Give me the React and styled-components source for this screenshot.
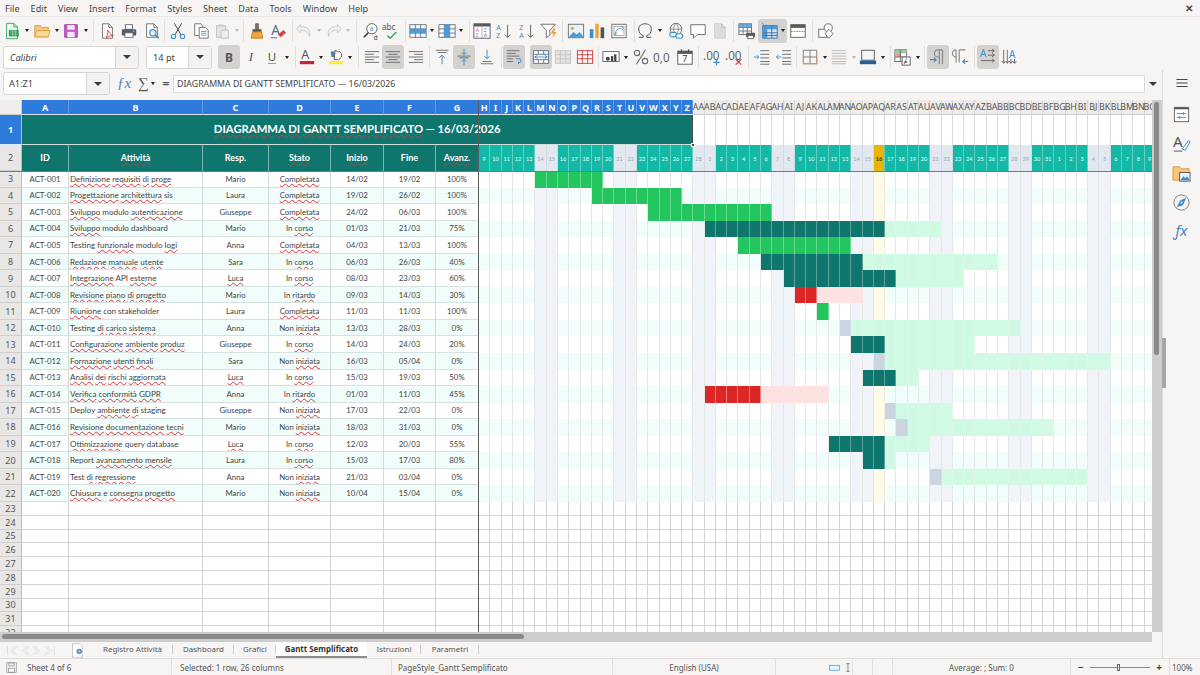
import React from "react";
import styled, { createGlobalStyle } from "styled-components";

const Global = createGlobalStyle`
  html, body { margin: 0; padding: 0; background: #f6f5f4; overflow: hidden; }
  * { box-sizing: border-box; }
`;

const UI = `"Noto Sans", "Open Sans", sans-serif`;
const CELL = `Lato, "Noto Sans", sans-serif`;

const Page = styled.div`
  width: 1200px; height: 675px; display: flex; flex-direction: column;
  background: #f6f5f4; font-family: ${UI}; color: #3d3d3d; overflow: hidden;
`;
const MenuBar = styled.div`
  height: 17px; display: flex; align-items: center; gap: 11px; padding-left: 5px;
  font-size: 9.15px; color: #444; border-bottom: 1px solid #e9e8e6; position: relative; flex: none;
`;
const CloseBtn = styled.span`
  position: absolute; right: 7px; top: 1px; font-size: 10px; font-weight: 700; color: #444;
`;
const ToolRow = styled.div`
  display: flex; align-items: center; height: ${p => p.$h}px; padding-left: ${p => p.$pl}px; flex: none;
`;
const Slot = styled.div`
  flex: none; width: ${p => p.$w}px; height: 24px; display: flex; align-items: center; justify-content: center;
  gap: 2px; border-radius: 3px; background: ${p => (p.$active ? "#d4d2cf" : "transparent")};
`;
const SepLine = styled.div`
  flex: none; width: ${p => p.$w}px; height: 22px; display: flex; justify-content: center;
  &::after { content: ""; width: 1px; height: 100%; background: ${p => (p.$blank ? "transparent" : "#e0dfdc")}; }
`;
const Caret = styled.span`
  flex: none; width: 0; height: 0; border-left: 2.5px solid transparent; border-right: 2.5px solid transparent;
  border-top: 3px solid ${p => (p.$off ? "#b9b8b6" : "#222")};
`;
const BigCaret = styled(Caret)`
  border-left-width: 4px; border-right-width: 4px; border-top-width: 4px; border-top-color: #3a3a3a;
`;
const Combo = styled.div`
  flex: none; width: ${p => p.$w}px; height: 23px; display: flex; background: #fff;
  border: 1px solid #d6d5d2; border-radius: 3px; margin-right: ${p => p.$mr || 0}px; overflow: hidden;
`;
const ComboText = styled.div`
  flex: 1; padding-left: ${p => p.$pl}px; font-size: 9.2px; line-height: 21px; color: #444;
  font-style: ${p => (p.$italic ? "italic" : "normal")};
`;
const ComboDrop = styled.div`
  flex: none; width: 23px; background: #f3f2f0; border-left: 1px solid #d6d5d2;
  display: flex; align-items: center; justify-content: center;
`;
const Bold = styled.span`font: 700 12px ${UI}; color: #555;`;
const Ital = styled.span`font: italic 400 13px "Liberation Serif", serif; color: #555;`;
const Under = styled.span`
  font: 400 11.5px ${UI}; color: #555; border-bottom: 1.5px solid #6fa8dc; line-height: 12px;
`;

const Workspace = styled.div`display: flex; flex: 1; min-height: 0;`;
const LeftCol = styled.div`width: 1162px; display: flex; flex-direction: column; flex: none;`;
const FormulaBar = styled.div`
  height: 30px; display: flex; align-items: center; padding: 0 0 3px 3px; flex: none;
`;
const FxGlyph = styled.span`
  width: 14px; margin-left: 7px; font: italic 400 15px "Liberation Serif", serif; color: #4a86c5; text-align: center;
`;
const SumGlyph = styled.span`
  width: 16px; margin-left: 4px; font: 400 15px "Liberation Serif", serif; color: #555; text-align: center;
`;
const EqGlyph = styled.span`
  width: 12px; margin-left: 5px; margin-right: 1px; font: 700 12px ${UI}; color: #555; text-align: center;
`;
const FormulaInput = styled.div`
  width: 972px; height: 18px; background: #fff; border: 1px solid #dcdbd8; border-radius: 1px;
  font-size: 8.75px; line-height: 16px; padding-left: 3px; color: #444; white-space: nowrap; flex: none;
`;
const FormulaDrop = styled.div`width: 16px; display: flex; justify-content: center; flex: none;`;

const SheetRow = styled.div`display: flex; height: 532px; flex: none;`;
const GridWrap = styled.div`
  position: relative; width: 1152px; height: 532px; overflow: hidden; flex: none; background: #fff;
`;
const Grid = styled.div`
  display: grid;
  grid-template-columns: 22px 47px 134px 66px 62px 53px 52px 43px repeat(60, 11.29px);
  grid-template-rows: 15px 30px 26px repeat(20, 16.55px) repeat(10, 13.8px);
  font-family: ${CELL};
`;
const Corner = styled.div`background: #efeeec; border-right: 1px solid #ccc; border-bottom: 1px solid #ccc;`;
const ColHead = styled.div`
  display: flex; align-items: center; justify-content: center; overflow: visible; white-space: nowrap;
  font: ${p => (p.$sel ? 700 : 400)} ${p => (p.$sel ? 9 : 8.8)}px ${UI};
  background: ${p => (p.$sel ? "#2f7bdc" : "#eeedeb")}; color: ${p => (p.$sel ? "#fff" : "#555")};
  border-right: 1px solid ${p => (p.$sel ? "#5c9ae6" : "#d6d5d3")};
  border-bottom: 1px solid ${p => (p.$sel ? "#dbe8f8" : "#ccc")};
`;
const RowHead = styled.div`
  display: flex; align-items: center; justify-content: center; font: ${p => (p.$sel ? 700 : 400)} 9px ${UI};
  background: ${p => (p.$sel ? "#2f7bdc" : "#e8e7e5")}; color: ${p => (p.$sel ? "#fff" : "#555")};
  border-right: 1px solid #bbb; border-bottom: 1px solid ${p => (p.$sel ? "#dbe8f8" : "#cfcecc")};
`;
const TitleCell = styled.div`
  grid-column: span 26; background: #0f766e; color: #fff; font: 700 11.3px ${CELL};
  display: flex; align-items: center; justify-content: center; white-space: pre;
  border-right: 1px solid #4a4a4a; border-bottom: 1.5px solid #cfe0dd; padding-bottom: 2px;
`;
const BlankCell = styled.div`border-right: 1px solid #dcdcda;`;
const HeadCell = styled.div`
  background: #0f766e; color: #fff; font: 700 9px ${CELL}; display: flex; align-items: center; justify-content: center;
  border-right: 1px solid #7fb8b0; padding-bottom: 2px;
`;
const DayCell = styled.div`
  background: ${p => (p.$today ? "#eab308" : p.$weekend ? "#e2e8f0" : "#14b8a6")};
  color: ${p => (p.$today ? "#3a2f00" : p.$weekend ? "#9aa5b5" : "#e8fffa")};
  font: ${p => (p.$today ? 700 : 400)} 5.6px ${CELL}; display: flex; align-items: center; justify-content: center;
  border-right: 1px solid ${p => (p.$weekend ? "#d5dae2" : "#5fd0c1")};
  white-space: nowrap;
`;
const DataCell = styled.div`
  background: ${p => (p.$alt ? "#f0fdfa" : "#fff")}; color: #444; font: 400 ${p => (p.$left ? 8.05 : 7.8)}px ${CELL};
  display: flex; align-items: center; justify-content: ${p => (p.$left ? "flex-start" : "center")};
  padding-left: ${p => (p.$left ? 1 : 0)}px; white-space: pre; overflow: hidden;
  border-right: 1px solid #cfdcd9; border-bottom: 1px solid #d6e2df;
`;
const GanttCell = styled.div`
  background: ${p => p.$bg}; border-right: 1px solid ${p => p.$line};
`;
const EmptyCell = styled.div`
  background: #fff; border-right: 1px solid #d3d3d3; border-bottom: 1px solid #d3d3d3;
`;
const Wavy = styled.span`
  text-decoration: underline wavy #d8343a 0.7px; text-underline-offset: 1px; text-decoration-skip-ink: none;
`;
const FreezeV = styled.div`
  position: absolute; left: 478px; top: 0; width: 1.4px; height: 532px; background: #5c5c5c;
`;
const FreezeH = styled.div`
  position: absolute; left: 0; top: 70.5px; width: 1152px; height: 1.4px; background: #777;
`;
const SelHandle = styled.div`
  position: absolute; left: 691px; top: 43px; width: 4px; height: 4px; background: #444; border: 0.5px solid #fff;
`;
const VScroll = styled.div`
  width: 10px; height: 532px; background: #cdcdcd; padding: 2px 0 0 2px; flex: none;
`;
const VThumb = styled.div`width: 5px; height: 253px; border-radius: 3px; background: #8a8a8a;`;
const HScroll = styled.div`
  width: 1152px; height: 10px; background: #cdcdcd; padding: 2px 0 0 2px; flex: none;
`;
const HThumb = styled.div`width: 522px; height: 5px; border-radius: 3px; background: #8a8a8a;`;
const TabBar = styled.div`
  flex: 1; display: flex; align-items: center; font-size: 7.9px; color: #555; padding-left: 5px; min-height: 0;
`;
const TabNav = styled.div`width: 62px; flex: none; display: flex; align-items: center;`;
const NewSheet = styled.div`width: 25px; flex: none; display: flex; align-items: center; padding-left: 4px;`;
const Tab = styled.div`
  flex: none; height: 16px; line-height: 15px; text-align: center; width: ${p => p.$w}px;
  font-weight: ${p => (p.$active ? 700 : 400)}; color: ${p => (p.$active ? "#333" : "#555")};
  border-bottom: ${p => (p.$active ? "2px solid #8d8d8d" : "none")};
  background: ${p => (p.$active ? "#fff" : "transparent")};
  position: relative;
  &::after {
    content: ""; position: absolute; right: 0; top: 3px; height: 9px; width: 1px;
    background: ${p => (p.$active ? "transparent" : "#cfcecc")};
  }
`;
const Sidebar = styled.div`
  flex: 1; border-left: 1px solid #dddcda; position: relative; display: flex; flex-direction: column;
  align-items: center; padding-top: 6px; gap: 10.5px;
`;
const SideMenu = styled.div`margin-bottom: 4px; display: flex;`;
const SideHandle = styled.div`
  position: absolute; left: -1px; top: 268px; width: 4px; height: 50px; background: #a5a5a5;
`;
const Status = styled.div`
  height: 17px; flex: none; display: flex; align-items: center; font-size: 8px; color: #555;
  border-top: 1px solid #dedddb;
`;
const StatusCell = styled.div`
  flex: none; width: ${p => p.$w}px; height: 100%; display: flex; align-items: center;
  justify-content: ${p => (p.$center ? "center" : "flex-start")};
  padding-left: ${p => p.$pl || 0}px; border-right: 1px solid ${p => (p.$noLine ? "transparent" : "#e2e1df")};
  white-space: nowrap; gap: 3px;
`;
const SheetCount = styled.span`margin-left: 6px;`;
const ZoomTrack = styled.div`
  width: 60px; height: 1px; background: #8a8a8a; position: relative; flex: none; margin: 0 1px;
`;
const ZoomKnob = styled.div`
  position: absolute; left: 27px; top: -3px; width: 3px; height: 7px; border: 1px solid #666; background: #eee;
`;
const ZoomSign = styled.span`font: 700 10px ${UI}; color: #444; width: 10px; text-align: center;`;

const Svg = styled.svg`flex: none; display: block; overflow: visible;`;
const Ico = ({ n, s = 18 }) => <Svg width={s} height={s} viewBox="0 0 20 20" fill="none">{ICONS[n]}</Svg>;

const Lines = ({ rows, c = "#666", w = 1 }) => (
  <>{rows.map(([a, y, b], i) => <path key={i} d={`M${a} ${y}H${b}`} stroke={c} strokeWidth={w} />)}</>
);
const T = ({ x, y, c = "#555", s = 8, w = 400, children, i }) => (
  <text x={x} y={y} fill={c} fontSize={s} fontWeight={w} fontStyle={i ? "italic" : "normal"} fontFamily="Noto Sans, sans-serif">{children}</text>
);
const TableG = ({ c = "#5a5a5a", x = 2, y = 3, w = 16, h = 14 }) => (
  <g stroke={c}>
    <rect x={x} y={y} width={w} height={h} fill="#fff" />
    <path d={`M${x} ${y + h / 3}H${x + w}M${x} ${y + (2 * h) / 3}H${x + w}M${x + w / 3} ${y}V${y + h}M${x + (2 * w) / 3} ${y}V${y + h}`} />
  </g>
);

const ICONS = {
  new: <><path d="M4 1.5h8l4 4v13H4z" fill="#f2faf4" stroke="#35a05a" /><path d="M12 1.5v4h4" stroke="#35a05a" /><rect x="6.5" y="9" width="11" height="7" fill="#2f9a55" /><path d="M8 11h8M8 13.5h8M11 9v7M14 9v7" stroke="#bfe6cc" strokeWidth=".6" /></>,
  open: <><path d="M2 16.5V4h6l2 2h7v10.5z" fill="#f7c77c" stroke="#dc9a45" /><path d="M2 16.5l2-7h15l-2 7z" fill="#fbd999" stroke="#dc9a45" /></>,
  save: <><path d="M3 3h14v14H3z" fill="#c25fc6" stroke="#9a3aa0" /><rect x="6" y="3.5" width="8" height="5" fill="#f6e7f7" /><rect x="6" y="11" width="8" height="6" fill="#f6e7f7" /></>,
  pdf: <><path d="M5 2h7l4 4v12H5z" fill="#fff" stroke="#6d6d6d" /><path d="M12 2v4h4" stroke="#6d6d6d" /><path d="M9 18c2-5 2-7 2-9 1 3 3 5 6 6-3 0-6 1-8 3z" stroke="#d8423c" fill="none" /></>,
  print: <><rect x="6" y="3" width="8" height="5" fill="#fff" stroke="#666" /><rect x="2" y="8" width="16" height="7" rx="1" fill="#4e5d6b" /><rect x="5.5" y="12" width="9" height="5" fill="#fff" stroke="#666" /><rect x="14" y="9.5" width="2" height="1.4" fill="#9ad" /></>,
  preview: <><path d="M4 2h8l4 4v11H4z" fill="#fff" stroke="#6d6d6d" /><path d="M12 2v4h4" stroke="#6d6d6d" /><circle cx="11" cy="12" r="3.5" fill="#e5f1fb" stroke="#3d8ecf" strokeWidth="1.3" /><path d="M13.5 14.5l4 3.5" stroke="#3d8ecf" strokeWidth="1.7" /></>,
  cut: <><path d="M6 1.5l7.5 13M14 1.5l-7.5 13" stroke="#444" strokeWidth="1.1" /><circle cx="5" cy="16" r="2.4" stroke="#3d8ecf" strokeWidth="1.2" /><circle cx="15" cy="16" r="2.4" stroke="#3d8ecf" strokeWidth="1.2" /></>,
  copy: <><path d="M3 2h7l2 2v11H3z" fill="#fff" stroke="#6d6d6d" /><path d="M8 6h7l3 3v9H8z" fill="#fff" stroke="#6d6d6d" /><Lines rows={[[10, 10.5, 16], [10, 12.5, 16], [10, 14.5, 16]]} c="#4d9bd6" /></>,
  paste: <><path d="M4 4h10v13H4z" fill="#e6e5e3" stroke="#bdbcba" /><rect x="6.5" y="2.5" width="5" height="3" fill="#cfcecc" /><path d="M9 9h8v9H9z" fill="#efeeec" stroke="#bdbcba" /></>,
  clone: <><path d="M8.5 2h3v6h-3z" fill="#8a7763" stroke="#6f5d4b" /><rect x="5" y="8" width="10" height="3" fill="#555" /><path d="M5 11h10l1.5 7h-13z" fill="#f0a63c" stroke="#c67d1d" /></>,
  clear: <><T x="2.5" y="14" s={15} c="#4d6f95">A</T><path d="M2 17.5h7" stroke="#4d6f95" /><path d="M10 14l6-5 3 3-6 5z" fill="#e0433d" /></>,
  undo: <path d="M6 3L2 7.5l4 4.5V9c6 0 9 2 10 7 2-8-3-11-10-11z" stroke="#c8c7c5" fill="#f3f2f0" />,
  redo: <path d="M14 3l4 4.5-4 4.5V9c-6 0-9 2-10 7C2 8 7 5 14 5z" stroke="#c8c7c5" fill="#f3f2f0" />,
  find: <><circle cx="11" cy="7.5" r="5.7" stroke="#555" fill="#fff" /><T x="8.5" y="10" s={7} c="#3d7fc1">a</T><path d="M7 12l-5 5" stroke="#333" strokeWidth="1.8" /><T x="13" y="19.500" s={7} c="#444">d</T></>,
  spell: <><T x="0" y="9" s={9} c="#555">abc</T><path d="M6 15l3 3 7-7" stroke="#35a05a" strokeWidth="1.6" /></>,
  rowT: <><TableG x={1} y={3} w={18} h={14} c="#5c6e80" /><rect x="1" y="7.6" width="18" height="4.6" fill="#4d9bd6" /></>,
  colT: <><TableG x={1} y={3} w={18} h={14} c="#5c6e80" /><rect x="7" y="3" width="6" height="14" fill="#4d9bd6" /></>,
  sort: <><rect x="1" y="2" width="18" height="16" fill="#fff" stroke="#5a5a5a" /><rect x="1" y="2" width="18" height="3" fill="#5a5a5a" /><path d="M10 5v13" stroke="#aaa" /><T x="3" y="11" s={5.500} c="#c05ac5">A</T><T x="3" y="17" s={5.500} c="#c05ac5">Z</T><T x="12" y="11" s={5.500} c="#3d8ecf">Z</T><T x="12" y="17" s={5.500} c="#3d8ecf">A</T></>,
  asc: <><T x="1.500" y="9" s={8} c="#3d8ecf">A</T><T x="1.500" y="18" s={8} c="#c05ac5">Z</T><path d="M14 3v14M11 14l3 3 3-3" stroke="#666" strokeWidth="1.1" /></>,
  desc: <><T x="1.500" y="9" s={8} c="#c05ac5">Z</T><T x="1.500" y="18" s={8} c="#3d8ecf">A</T><path d="M14 3v14M11 14l3 3 3-3" stroke="#666" strokeWidth="1.1" /></>,
  filter: <><path d="M1 2.5h16l-6 7v5l-4 3v-8z" fill="#fff" stroke="#666" /><path d="M15 7l-3 6h3l-1.5 5 5-7h-3l2-4z" fill="#f0a63c" /></>,
  image: <><rect x="1.5" y="2.5" width="17" height="15" fill="#e8f3fb" stroke="#6d6d6d" /><circle cx="6" cy="7" r="1.8" fill="#f0a63c" /><path d="M2 17l5-6 4 3 3-3 4 5v1z" fill="#4d9bd6" /></>,
  chart: <><rect x="2" y="8" width="4" height="10" fill="#3d8ecf" /><rect x="8" y="2" width="4" height="16" fill="#f0a63c" /><rect x="14" y="6" width="4" height="12" fill="#555" /></>,
  pivot: <><rect x="2" y="2.5" width="16" height="15" fill="#f5f5f5" stroke="#6d6d6d" /><rect x="4.5" y="5" width="11" height="10" fill="#fff" stroke="#aaa" /><path d="M6 12c1-4 4-5 7-5M13 5l2 2-2 2M7 15l-2-2 3-1" stroke="#3d8ecf" /></>,
  omega: <path d="M3 17h5v-2c-3-1-5-3-5-7 0-4 3-6 7-6s7 2 7 6c0 4-2 6-5 7v2h5" stroke="#555" strokeWidth="1.1" />,
  link: <><circle cx="10" cy="8" r="6.5" stroke="#666" /><path d="M3.5 8h13M10 1.5c-3.5 4-3.5 9 0 13M10 1.5c3.5 4 3.5 9 0 13" stroke="#666" strokeWidth=".7" /><rect x="3" y="11.5" width="7.5" height="5" rx="2.5" fill="#fff" stroke="#3d8ecf" strokeWidth="1.2" /><rect x="10" y="13" width="7.5" height="5" rx="2.5" fill="#fff" stroke="#3d8ecf" strokeWidth="1.2" /></>,
  comment: <path d="M2 3h16v11H9l-4 4v-4H2z" fill="#fff" stroke="#666" />,
  headers: <><path d="M4 2h8l4 4v12H4z" fill="#dedddb" stroke="#cfcecc" /><path d="M12 2v4h4" stroke="#bbb" /></>,
  printArea: <><TableG x={1} y={2} w={14} h={12} c="#5c6e80" /><rect x="1" y="2" width="14" height="4" fill="#4d9bd6" opacity=".8" /><rect x="9" y="12" width="10" height="5" rx="1" fill="#5a5a5a" /><rect x="11" y="15" width="6" height="3.5" fill="#fff" stroke="#666" /></>,
  freeze: <><rect x="2" y="4" width="16" height="14" fill="#cfe3f4" stroke="#3d6e9e" /><rect x="2" y="4" width="5" height="14" fill="#4d9bd6" /><rect x="2" y="4" width="16" height="4" fill="#4d9bd6" /><path d="M2 12h16M2 15h16M12 4v14" stroke="#3d6e9e" /><path d="M1 1l5 5M3 6h3V3" stroke="#3d8ecf" /></>,
  split: <><rect x="2" y="3" width="16" height="14" fill="#fff" stroke="#5a5a5a" /><rect x="2" y="3" width="16" height="3.5" fill="#5a5a5a" /><path d="M2 10.5h16" stroke="#3d8ecf" strokeDasharray="2 1" /></>,
  shapes: <><rect x="2" y="8" width="9" height="9" stroke="#666" fill="#fff" /><circle cx="12.5" cy="6.5" r="4.5" stroke="#666" fill="#fff" /><path d="M13 8l5 5-5 5-4-5z" stroke="#666" fill="#fff" /></>,
  color: <><T x="3.5" y="12.5" s={14} c="#555">A</T><rect x="2" y="14.5" width="16" height="3.5" fill="#c8242b" /></>,
  hl: <><path d="M4 4h6v6h-5z" fill="#4d7fb5" /><path d="M9 2.5l2 1 1 1 2-.5 2 2v4l-3 3H8z" fill="#fff" stroke="#555" /><rect x="2" y="14.5" width="16" height="3.5" fill="#ffee33" /></>,
  aLeft: <Lines rows={[[2, 4, 18], [2, 7, 12], [2, 10, 18], [2, 13, 12], [2, 16, 18]]} />,
  aCenter: <Lines rows={[[2, 4, 18], [5, 7, 15], [2, 10, 18], [5, 13, 15], [2, 16, 18]]} />,
  aRight: <Lines rows={[[2, 4, 18], [8, 7, 18], [2, 10, 18], [8, 13, 18], [2, 16, 18]]} />,
  vTop: <><Lines rows={[[3, 2.5, 17], [5, 5, 15]]} /><path d="M10 18V8M7 11l3-3 3 3" stroke="#3d8ecf" strokeWidth="1.1" /></>,
  vMid: <><Lines rows={[[3, 9, 17], [5, 11, 15]]} /><path d="M10 1v6M7.5 5l2.5 2.5L12.500 5M10 19v-6M7.5 15l2.500-2.500 2.500 2.500" stroke="#3d8ecf" strokeWidth="1.1" /></>,
  vBot: <><Lines rows={[[5, 15, 15], [3, 17.5, 17]]} /><path d="M10 2v10M7 9l3 3 3-3" stroke="#3d8ecf" strokeWidth="1.1" /></>,
  wrap: <><Lines rows={[[2, 3, 16], [2, 6, 12], [2, 9, 16], [2, 12, 9], [2, 15, 9]]} /><path d="M12 12h5l1 3-3 2M15 15l0 3" stroke="#3d8ecf" strokeWidth="1.1" /></>,
  merge: <><rect x="1.500" y="3" width="17" height="14" fill="#fff" stroke="#5c6e80" /><path d="M1.500 7h17M1.500 13h17M7 3v4M13 3v4M7 13v4M13 13v4" stroke="#5c6e80" /><path d="M3 10h14M6 8l-3 2 3 2M14 8l3 2-3 2" stroke="#3d8ecf" /></>,
  unmerge: <><rect x="1.500" y="3" width="17" height="14" fill="#e5e4e2" stroke="#c4c3c1" /><path d="M1.500 7.500h17M1.500 12h17M7 3v14M13 3v14" stroke="#c4c3c1" /></>,
  splitC: <><rect x="1.500" y="3" width="17" height="14" fill="#fff" stroke="#c33" /><path d="M1.500 7.500h17M1.500 12h17M7 3v14M13 3v14" stroke="#c33" /></>,
  currency: <><rect x="1" y="4" width="18" height="11" fill="#fff" stroke="#666" /><circle cx="6.500" cy="12" r="2.200" fill="#444" /><rect x="10" y="9" width="2.500" height="6" fill="#444" /><rect x="13.500" y="7" width="2.500" height="8" fill="#444" /></>,
  percent: <><circle cx="5.500" cy="5.500" r="3" stroke="#666" strokeWidth="1.200" /><circle cx="14.500" cy="14.500" r="3" stroke="#666" strokeWidth="1.200" /><path d="M15 2L5 18" stroke="#666" strokeWidth="1.200" /></>,
  number: <><T x="-1" y="15.500" s={13} c="#666">0,0</T></>,
  date: <><rect x="2" y="3.500" width="16" height="14.500" fill="#fff" stroke="#555" /><rect x="2" y="3.500" width="16" height="3" fill="#555" /><path d="M6 1.500v3M14 1.500v3" stroke="#555" strokeWidth="1.400" /><T x="7" y="16" s={10} c="#444">7</T></>,
  addD: <><T x="0" y="13" s={13} c="#666">.00</T><path d="M15 12.500v7M11.500 16h7" stroke="#3d8ecf" strokeWidth="1.400" /></>,
  delD: <><T x="0" y="13" s={13} c="#666">.00</T><path d="M12 12.500l6 6M18 12.500l-6 6" stroke="#d8423c" strokeWidth="1.300" /></>,
  indent: <><Lines rows={[[8, 3, 18], [8, 7, 18], [8, 11, 18], [8, 15, 18], [8, 18, 18]]} /><path d="M1 10h5M4 7.500L6.500 10 4 12.500" stroke="#3d8ecf" /></>,
  outdent: <><Lines rows={[[8, 3, 18], [8, 7, 18], [8, 11, 18], [8, 15, 18], [8, 18, 18]]} /><path d="M7 10H1.500M4 7.500L1.500 10 4 12.500" stroke="#3d8ecf" /></>,
  border: <><path d="M2.500 2.500h15v15h-15zM10 2.500v15M2.500 10h15" stroke="#777" /><path d="M2.500 17.500h15v-7" stroke="#d89a5a" /></>,
  lineS: <Lines rows={[[2, 3, 18], [2, 6, 18], [2, 9, 18], [2, 12, 18], [2, 15, 18], [2, 17.500, 18]]} c="#b5b4b2" />,
  borderC: <><rect x="3" y="2.500" width="14" height="11" fill="#f4f4f4" stroke="#555" /><rect x="1" y="14" width="18" height="4" fill="#1f5f9e" /></>,
  cond: <><rect x="1" y="2" width="13" height="13" fill="#fff" stroke="#666" /><rect x="1" y="2" width="13" height="4" fill="#9fc99f" /><rect x="1" y="6" width="7" height="4" fill="#e99" /><path d="M1 10h13M7 2v13" stroke="#666" /><rect x="9" y="10" width="9" height="9" fill="#fff" stroke="#555" /><T x="10.500" y="17.500" s={8} c="#333">≠</T></>,
  ltr: <><path d="M15 2v16M11.500 2v16M15 2H10a4 4 0 000 8h1.500" stroke="#888" strokeWidth="1.300" /><path d="M1 13h7M5.500 10.500L8 13l-2.500 2.500" stroke="#3d8ecf" strokeWidth="1.300" /></>,
  rtl: <><path d="M8 2v14M4.500 2v14M8 2H14v1M4.500 2a4 4 0 000 8" stroke="#888" strokeWidth="1.300" /><path d="M18 15h-6M14.500 12.500L12 15l2.500 2.500" stroke="#3d8ecf" strokeWidth="1.300" /></>,
  hor: <><T x="1" y="10" s={11} c="#3d8ecf">A</T><path d="M10 3h7M14.500 1l2.500 2-2.500 2M10 8h7M14.500 6l2.500 2-2.500 2M2 14h15M14.500 12l2.500 2-2.500 2" stroke="#555" strokeWidth=".9" /></>,
  ver: <><T x="9" y="11" s={11} c="#3d8ecf">A</T><path d="M3 2v15M1 14.500l2 2.500 2-2.500M7 2v15M5.500 14.500L7 17l2-2.500M11 12v5M9 14.500l2 2.500 2-2.500M15 12v5M13 14.500l2 2.500 2-2.500" stroke="#555" strokeWidth=".9" /></>,
  props: <><rect x="2.500" y="2.500" width="15" height="15" fill="#fff" stroke="#666" /><rect x="2.500" y="2.500" width="15" height="2" fill="#555" /><path d="M5 9h10M5 13h10" stroke="#3d8ecf" /><path d="M12 7.500v3M8 11.500v3" stroke="#3d8ecf" /></>,
  styles: <><T x="1" y="14" s={16} c="#555">A</T><path d="M2 18h9" stroke="#555" /><path d="M11 16l6-9 2 1-5 9z" fill="#fff" stroke="#3d8ecf" /></>,
  gallery: <><path d="M1 17V3h7l2 2h8v12z" fill="#f7c77c" stroke="#dc9a45" /><rect x="8" y="9" width="11" height="9" fill="#e8f3fb" stroke="#555" /><path d="M9 17l3-4 2 2 2-2 2 3v1z" fill="#3d8ecf" /></>,
  nav: <><circle cx="10" cy="10" r="8" stroke="#777" /><path d="M15 5l-3.500 8L5 15l3.500-7z" fill="#3d8ecf" /><circle cx="10" cy="10" r="1" fill="#fff" /></>,
  fx: <T x="2" y="14" s={16} c="#4a86c5" i>ƒx</T>,
  hamb: <path d="M2 5h16M2 10h16M2 15h16" stroke="#444" strokeWidth="1.600" />,
  saveS: <><path d="M2.500 2.500h15v15h-15z" stroke="#888" fill="#f3f3f3" /><rect x="6" y="3" width="8" height="4.500" stroke="#888" /><rect x="5.500" y="11" width="9" height="6.500" stroke="#888" /></>,
  newTab: <><path d="M2 1h10l3 3v15H2z" fill="#fff" stroke="#bbb" /><circle cx="11" cy="11" r="3.500" fill="#3d7fc1" /><path d="M11 9v4M9 11h4" stroke="#fff" strokeWidth=".8" /></>,
  rect: <rect x="1" y="6" width="18" height="9" fill="#e6f1fa" stroke="#4d9bd6" strokeWidth="1.300" />,
  beam: <path d="M6 3h6M9 3v14M6 17h6" stroke="#555" strokeWidth="1.200" />,
  nav1: <path d="M4 3v14M15 3l-7 7 7 7M19 3l-7 7 7 7" stroke="#d0cfcd" fill="none" />,
  nav2: <path d="M14 3l-7 7 7 7M18 3l-7 7 7 7" stroke="#d0cfcd" fill="none" />,
  nav3: <path d="M6 3l7 7-7 7M2 3l7 7-7 7" stroke="#d0cfcd" fill="none" />,
  nav4: <path d="M16 3v14M5 3l7 7-7 7M1 3l7 7-7 7" stroke="#d0cfcd" fill="none" />,
};

const MENUS = ["File", "Edit", "View", "Insert", "Format", "Styles", "Sheet", "Data", "Tools", "Window", "Help"];

/* item: [kind, width, icon] : i icon, a caret, s separator */
const TOOLS1 = [
  ["i", 22, "new"], ["a", 8], ["i", 22, "open"], ["a", 7], ["i", 22, "save"], ["a", 8], ["s", 6],
  ["i", 22, "pdf"], ["i", 22, "print"], ["i", 23, "preview"], ["s", 3], ["i", 24, "cut"], ["i", 21, "copy"], ["i", 22, "paste"], ["o", 7], ["s", 6],
  ["i", 21, "clone"], ["i", 22, "clear"], ["s", 6], ["i", 18, "undo"], ["o", 12], ["i", 18, "redo"], ["o", 10], ["s", 6],
  ["i", 23, "find"], ["i", 18, "spell"], ["s", 10], ["i", 16, "rowT"], ["a", 12], ["i", 18, "colT"], ["a", 10], ["s", 6],
  ["i", 20, "sort"], ["i", 24, "asc"], ["i", 22, "desc"], ["i", 22, "filter"], ["s", 4], ["i", 24, "image"], ["i", 18, "chart"], ["i", 26, "pivot"], ["s", 4],
  ["i", 18, "omega"], ["a", 12], ["i", 20, "link"], ["i", 24, "comment"], ["i", 20, "headers"], ["s", 6],
  ["i", 22, "printArea"], ["f", 29, "freeze"], ["i", 22, "split"], ["s", 6], ["i", 22, "shapes"],
];
const TOOLS2 = [
  ["bold", 22], ["ital", 22], ["under", 20], ["a", 10], ["s", 6], ["i", 18, "color"], ["a", 10], ["i", 20, "hl"], ["a", 8], ["s", 8],
  ["i", 20, "aLeft"], ["x", 22, "aCenter"], ["i", 24, "aRight"], ["s", 3], ["i", 22, "vTop"], ["x", 22, "vMid"], ["i", 24, "vBot"], ["s", 4],
  ["x", 22, "wrap"], ["b", 5], ["x", 22, "merge"], ["i", 22, "unmerge"], ["i", 22, "splitC"], ["s", 4],
  ["i", 22, "currency"], ["a", 8], ["i", 22, "percent"], ["i", 22, "number"], ["i", 22, "date"], ["s", 5], ["i", 22, "addD"], ["i", 22, "delD"], ["s", 6],
  ["i", 22, "indent"], ["i", 21, "outdent"], ["s", 5], ["i", 22, "border"], ["a", 7], ["i", 22, "lineS"], ["o", 8], ["i", 20, "borderC"], ["a", 10], ["s", 4],
  ["i", 22, "cond"], ["a", 8], ["s", 5], ["x", 22, "ltr"], ["b", 1], ["i", 22, "rtl"], ["s", 5], ["x", 22, "hor"], ["i", 22, "ver"],
];

const Tool = ({ item }) => {
  const [k, w, n] = item;
  if (k === "s") return <SepLine $w={w} />;
  if (k === "b") return <SepLine $w={w} $blank />;
  if (k === "a") return <Slot $w={w}><Caret /></Slot>;
  if (k === "o") return <Slot $w={w}><Caret $off /></Slot>;
  if (k === "bold") return <Slot $w={w} $active><Bold>B</Bold></Slot>;
  if (k === "ital") return <Slot $w={w}><Ital>I</Ital></Slot>;
  if (k === "under") return <Slot $w={w}><Under>U</Under></Slot>;
  if (k === "f") return <Slot $w={w} $active><Ico n={n} /><Caret /></Slot>;
  return <Slot $w={w} $active={k === "x"}><Ico n={n} /></Slot>;
};

const TASKS = [
  ["ACT-001", "~Definizione ~requisiti ~di ~proge", "Mario", 5, 10, 6, "g"],
  ["ACT-002", "~Progettazione ~architettura sis", "Laura", 10, 17, 8, "g"],
  ["ACT-003", "~Sviluppo modulo ~autenticazione", "Giuseppe", 15, 25, 11, "g"],
  ["ACT-004", "~Sviluppo modulo dashboard", "Mario", 20, 40, 16, "d"],
  ["ACT-005", "Testing ~funzionale modulo ~logi", "Anna", 23, 32, 10, "g"],
  ["ACT-006", "~Redazione ~manuale ~utente", "Sara", 25, 45, 9, "d"],
  ["ACT-007", "~Integrazione API ~esterne", "~Luca", 27, 42, 10, "d"],
  ["ACT-008", "~Revisione ~piano ~di ~progetto", "Mario", 28, 33, 2, "r"],
  ["ACT-009", "~Riunione con stakeholder", "Laura", 30, 30, 1, "g"],
  ["ACT-010", "Testing ~di ~carico ~sistema", "Anna", 32, 47, 0, "d"],
  ["ACT-011", "~Configurazione ~ambiente ~produz", "Giuseppe", 33, 43, 3, "d"],
  ["ACT-012", "~Formazione ~utenti ~finali", "Sara", 35, 55, 0, "d"],
  ["ACT-013", "~Analisi ~dei ~rischi ~aggiornata", "~Luca", 34, 38, 3, "d"],
  ["ACT-014", "~Verifica ~conformità ~GDPR", "Anna", 20, 30, 5, "r"],
  ["ACT-015", "Deploy ~ambiente ~di staging", "Giuseppe", 36, 41, 0, "d"],
  ["ACT-016", "~Revisione ~documentazione ~tecni", "Mario", 37, 50, 0, "d"],
  ["ACT-017", "~Ottimizzazione query database", "~Luca", 31, 39, 5, "d"],
  ["ACT-018", "Report ~avanzamento ~mensile", "Laura", 34, 36, 2, "d"],
  ["ACT-019", "Test ~di ~regressione", "Anna", 40, 53, 0, "d"],
  ["ACT-020", "~Chiusura e ~consegna ~progetto", "Mario", 60, 65, 0, "d"],
];
const META = [
  ["~Completata", "14/02", "19/02", "100%"], ["~Completata", "19/02", "26/02", "100%"], ["~Completata", "24/02", "06/03", "100%"],
  ["In ~corso", "01/03", "21/03", "75%"], ["~Completata", "04/03", "13/03", "100%"], ["In ~corso", "06/03", "26/03", "40%"],
  ["In ~corso", "08/03", "23/03", "60%"], ["In ~ritardo", "09/03", "14/03", "30%"], ["~Completata", "11/03", "11/03", "100%"],
  ["Non ~iniziata", "13/03", "28/03", "0%"], ["In ~corso", "14/03", "24/03", "20%"], ["Non ~iniziata", "16/03", "05/04", "0%"],
  ["In ~corso", "15/03", "19/03", "50%"], ["In ~ritardo", "01/03", "11/03", "45%"], ["Non ~iniziata", "17/03", "22/03", "0%"],
  ["Non ~iniziata", "18/03", "31/03", "0%"], ["In ~corso", "12/03", "20/03", "55%"], ["In ~corso", "15/03", "17/03", "80%"],
  ["Non ~iniziata", "21/03", "03/04", "0%"], ["Non ~iniziata", "10/04", "15/04", "0%"],
];
const DAYS = Array.from({ length: 60 }, (_, i) => {
  const d = new Date(2026, 1, 9 + i);
  return { n: d.getDate(), weekend: d.getDay() === 0 || d.getDay() === 6, today: i === 35 };
});
const colName = i => (i < 26 ? String.fromCharCode(65 + i) : String.fromCharCode(64 + Math.floor(i / 26)) + String.fromCharCode(65 + (i % 26)));

const Rich = ({ text }) => (
  <span>
    {text.split(" ").map((w, i) => (
      <React.Fragment key={i}>
        {i > 0 ? " " : ""}
        {w[0] === "~" ? <Wavy>{w.slice(1)}</Wavy> : w}
      </React.Fragment>
    ))}
  </span>
);

const ganttStyle = (task, day, alt, i) => {
  const [, , , from, to, done, kind] = task;
  const base = day.today ? "#fefce8" : day.weekend ? "#f0f3f8" : alt ? "#f0fdfa" : "#fff";
  const softLine = day.today ? "#f2efd8" : "#e4e8e6";
  if (i < from || i > to) return { bg: base, line: softLine };
  if (done === 0 && i === from) return { bg: "#cbd5e1", line: "#d6dde6" };
  if (i < from + done) {
    const bg = kind === "g" ? "#22c55e" : kind === "r" ? "#dc2626" : "#0f766e";
    return { bg, line: kind === "g" ? "#6bd992" : kind === "r" ? "#ec7f7f" : "#5aa39c" };
  }
  if (kind === "r") return { bg: "#fee2e2", line: "#f9e7e7" };
  return { bg: "#d1fae5", line: "#dcf8ea" };
};

const HEAD = ["ID", "~Attività", "Resp.", "~Stato", "~Inizio", "Fine", "~Avanz."];

const Sheet = () => (
  <Grid>
    <Corner />
    {Array.from({ length: 67 }, (_, i) => <ColHead key={i} $sel={i < 26}>{colName(i)}</ColHead>)}

    <RowHead $sel>1</RowHead>
    <TitleCell><span><Wavy>DIAGRAMMA DI GANTT SEMPLIFICATO</Wavy> — 16/03/2026</span></TitleCell>
    {Array.from({ length: 41 }, (_, i) => <BlankCell key={i} />)}

    <RowHead>2</RowHead>
    {HEAD.map(h => <HeadCell key={h}><Rich text={h} /></HeadCell>)}
    {DAYS.map((d, i) => <DayCell key={i} $today={d.today} $weekend={d.weekend}>{d.n}</DayCell>)}

    {TASKS.map((t, r) => {
      const alt = r % 2 === 1;
      const m = META[r];
      return (
        <React.Fragment key={t[0]}>
          <RowHead>{r + 3}</RowHead>
          <DataCell $alt={alt}>{t[0]}</DataCell>
          <DataCell $alt={alt} $left><Rich text={t[1]} /></DataCell>
          <DataCell $alt={alt}><Rich text={t[2]} /></DataCell>
          <DataCell $alt={alt}><Rich text={m[0]} /></DataCell>
          <DataCell $alt={alt}>{m[1]}</DataCell>
          <DataCell $alt={alt}>{m[2]}</DataCell>
          <DataCell $alt={alt}>{m[3]}</DataCell>
          {DAYS.map((d, i) => {
            const s = ganttStyle(t, d, alt, i);
            return <GanttCell key={i} $bg={s.bg} $line={s.line} />;
          })}
        </React.Fragment>
      );
    })}

    {Array.from({ length: 10 }, (_, r) => (
      <React.Fragment key={r}>
        <RowHead>{r + 23}</RowHead>
        {Array.from({ length: 67 }, (_, i) => <EmptyCell key={i} />)}
      </React.Fragment>
    ))}
  </Grid>
);

export default function App() {
  return (
    <Page>
      <Global />
      <MenuBar>
        {MENUS.map(m => <span key={m}>{m}</span>)}
        <CloseBtn>✕</CloseBtn>
      </MenuBar>
      <ToolRow $h={27} $pl={1}>{TOOLS1.map((t, i) => <Tool key={i} item={t} />)}</ToolRow>
      <ToolRow $h={26} $pl={3}>
        <Combo $w={136} $mr={7}>
          <ComboText $pl={6} $italic>Calibri</ComboText>
          <ComboDrop><BigCaret /></ComboDrop>
        </Combo>
        <Combo $w={66} $mr={6}>
          <ComboText $pl={6}>14 pt</ComboText>
          <ComboDrop><BigCaret /></ComboDrop>
        </Combo>
        {TOOLS2.map((t, i) => <Tool key={i} item={t} />)}
      </ToolRow>
      <Workspace>
        <LeftCol>
          <FormulaBar>
            <Combo $w={107}>
              <ComboText $pl={5}>A1:Z1</ComboText>
              <ComboDrop><BigCaret /></ComboDrop>
            </Combo>
            <FxGlyph>ƒx</FxGlyph>
            <SumGlyph>∑</SumGlyph>
            <Caret />
            <EqGlyph>=</EqGlyph>
            <FormulaInput>DIAGRAMMA DI GANTT SEMPLIFICATO — 16/03/2026</FormulaInput>
            <FormulaDrop><BigCaret /></FormulaDrop>
          </FormulaBar>
          <SheetRow>
            <GridWrap>
              <Sheet />
              <FreezeV />
              <FreezeH />
              <SelHandle />
            </GridWrap>
            <VScroll><VThumb /></VScroll>
          </SheetRow>
          <HScroll><HThumb /></HScroll>
          <TabBar>
            <TabNav>
              <Ico n="nav1" s={13} /><Ico n="nav2" s={13} /><Ico n="nav3" s={13} /><Ico n="nav4" s={13} />
            </TabNav>
            <NewSheet><Ico n="newTab" s={15} /></NewSheet>
            <Tab $w={81}>Registro Attività</Tab>
            <Tab $w={61}>Dashboard</Tab>
            <Tab $w={42}>Grafici</Tab>
            <Tab $w={91} $active>Gantt Semplificato</Tab>
            <Tab $w={54}>Istruzioni</Tab>
            <Tab $w={58}>Parametri</Tab>
          </TabBar>
        </LeftCol>
        <Sidebar>
          <SideMenu><Ico n="hamb" s={14} /></SideMenu>
          <Ico n="props" s={19} />
          <Ico n="styles" s={19} />
          <Ico n="gallery" s={19} />
          <Ico n="nav" s={19} />
          <Ico n="fx" s={19} />
          <SideHandle />
        </Sidebar>
      </Workspace>
      <Status>
        <StatusCell $w={172} $pl={5}>
          <Ico n="saveS" s={13} />
          <SheetCount>Sheet 4 of 6</SheetCount>
        </StatusCell>
        <StatusCell $w={220} $pl={8}>Selected: 1 row, 26 columns</StatusCell>
        <StatusCell $w={221} $pl={6}>PageStyle_Gantt Semplificato</StatusCell>
        <StatusCell $w={163} $center>English (USA)</StatusCell>
        <StatusCell $w={77} $pl={53}><Ico n="rect" s={11} /><Ico n="beam" s={11} /></StatusCell>
        <StatusCell $w={20} />
        <StatusCell $w={20} />
        <StatusCell $w={178} $center>Average: ; Sum: 0</StatusCell>
        <StatusCell $w={99} $pl={5}>
          <ZoomSign>−</ZoomSign>
          <ZoomTrack><ZoomKnob /></ZoomTrack>
          <ZoomSign>+</ZoomSign>
        </StatusCell>
        <StatusCell $w={30} $pl={2} $noLine>100%</StatusCell>
      </Status>
    </Page>
  );
}
